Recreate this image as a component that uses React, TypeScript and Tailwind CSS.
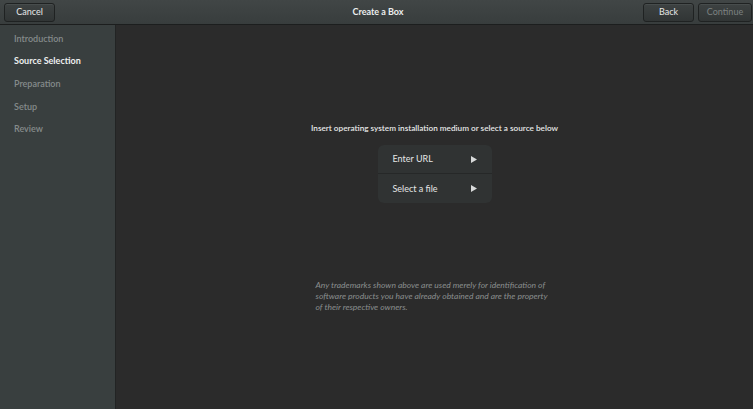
import React from 'react'

const steps = ['Introduction', 'Source Selection', 'Preparation', 'Setup', 'Review']

const HeaderButton: React.FC<{ label: string; disabled?: boolean; className?: string }> = ({
  label,
  disabled,
  className = '',
}) => (
  <button
    className={`flex h-[19px] items-center justify-center rounded-[3px] border border-[#1f2222] bg-gradient-to-b from-[#3d4242] to-[#313535] text-[9px] shadow-[inset_0_1px_0_rgba(255,255,255,0.06)] ${
      disabled ? 'text-[#7c8181]' : 'text-[#e6e8e8]'
    } ${className}`}
  >
    {label}
  </button>
)

const SourceRow: React.FC<{ label: string; top?: boolean }> = ({ label, top }) => (
  <div
    className={`flex h-[29px] items-center justify-between pl-[15px] pr-[15px] ${
      top ? 'border-b border-[#262828]' : ''
    }`}
  >
    <span className="text-[9px] text-[#e4e6e6]">{label}</span>
    <svg width="6" height="7" viewBox="0 0 6 7">
      <path d="M0 0 L6 3.5 L0 7 Z" fill="#d8dada" />
    </svg>
  </div>
)

export default function App() {
  return (
    <div
      className="flex h-[409px] w-[753px] flex-col bg-[#2b2b2b]"
      style={{ fontFamily: 'Lato, "Open Sans", sans-serif' }}
    >
      <header className="grid h-[25px] shrink-0 grid-cols-[1fr_auto_1fr] items-center border-b border-[#1c1e1e] bg-gradient-to-b from-[#414646] to-[#383d3d] pl-[4px] pr-[1px]">
        <HeaderButton label="Cancel" className="w-[51px]" />
        <span className="text-[9px] font-bold text-[#eceeee]">Create a Box</span>
        <div className="flex justify-end gap-[4px]">
          <HeaderButton label="Back" className="w-[51px]" />
          <HeaderButton label="Continue" disabled className="w-[54px]" />
        </div>
      </header>

      <div className="flex min-h-0 flex-1">
        <aside className="flex w-[116px] shrink-0 flex-col border-r border-[#222424] bg-[#393f3f] pl-[14px] pt-[2px]">
          {steps.map((s) => (
            <div
              key={s}
              className={`flex h-[22.7px] items-center text-[9px] ${
                s === 'Source Selection' ? 'font-bold text-[#eef0f0]' : 'font-semibold text-[#858b8b]'
              }`}
            >
              {s}
            </div>
          ))}
        </aside>

        <main className="flex flex-1 flex-col items-center pt-[97px]">
          <p className="text-[8.2px] font-semibold leading-[12px] text-[#e6e8e8]">
            Insert operating system installation medium or select a source below
          </p>
          <div className="mt-[11px] w-[114px] rounded-[6px] bg-[#303333]">
            <SourceRow label="Enter URL" top />
            <SourceRow label="Select a file" />
          </div>
          <p className="mt-[77px] w-[238px] text-[8.5px] italic leading-[11px] text-[#8a8e8e]">
            Any trademarks shown above are used merely for identification of software products you have
            already obtained and are the property of their respective owners.
          </p>
        </main>
      </div>
    </div>
  )
}
